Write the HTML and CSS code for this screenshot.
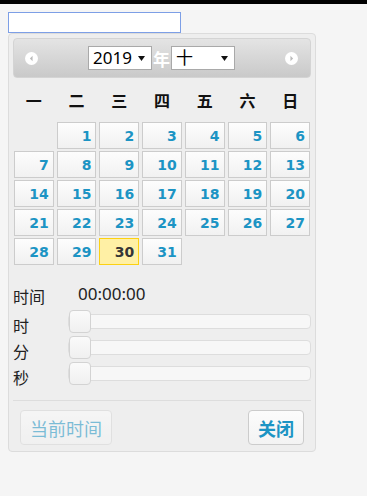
FILE: index.html
```html
<!DOCTYPE html>
<html lang="zh-CN">
<head>
    <meta charset="UTF-8">
    <meta name="viewport" content="width=device-width, initial-scale=1.0">
    <title>日期时间选择</title>
    <link rel="stylesheet" href="styles.css">
</head>
<body>
    <div class="topbar"></div>
    <input type="text" class="date-input" autofocus>

    <div class="datepicker">
        <div class="dp-header">
            <a class="dp-nav" title="上月">
                <svg width="13" height="13" viewBox="0 0 12 12"><circle cx="6" cy="6" r="6" fill="#fff"/><path d="M7 3.5 L4.5 6 L7 8.5 Z" fill="#bbb"/></svg>
            </a>
            <div class="dp-title">
                <span class="select-wrap">
                    <select class="dp-select year">
                        <option>2018</option>
                        <option selected>2019</option>
                        <option>2020</option>
                    </select>
                    <svg class="select-arrow" width="7" height="5" viewBox="0 0 7 5"><path d="M0 0 H7 L3.5 5 Z" fill="#111"/></svg>
                </span>
                <span class="year-label">年</span>
                <span class="select-wrap">
                    <select class="dp-select month">
                        <option>一</option><option>二</option><option>三</option><option>四</option>
                        <option>五</option><option>六</option><option>七</option><option>八</option>
                        <option>九</option><option selected>十</option><option>十一</option><option>十二</option>
                    </select>
                    <svg class="select-arrow" width="7" height="5" viewBox="0 0 7 5"><path d="M0 0 H7 L3.5 5 Z" fill="#111"/></svg>
                </span>
            </div>
            <a class="dp-nav" title="下月">
                <svg width="13" height="13" viewBox="0 0 12 12"><circle cx="6" cy="6" r="6" fill="#fff"/><path d="M5 3.5 L7.5 6 L5 8.5 Z" fill="#bbb"/></svg>
            </a>
        </div>

        <div class="dp-weekdays">
            <span>一</span><span>二</span><span>三</span><span>四</span><span>五</span><span>六</span><span>日</span>
        </div>

        <div class="dp-days" id="days"></div>

        <dl class="dp-time">
            <div class="time-row">
                <dt>时间</dt>
                <dd class="time-value">00:00:00</dd>
            </div>
            <div class="slider-row">
                <dt>时</dt>
                <dd><div class="slider"><span class="handle"></span></div></dd>
            </div>
            <div class="slider-row">
                <dt>分</dt>
                <dd><div class="slider"><span class="handle"></span></div></dd>
            </div>
            <div class="slider-row">
                <dt>秒</dt>
                <dd><div class="slider"><span class="handle"></span></div></dd>
            </div>
        </dl>

        <div class="dp-buttons">
            <button type="button" class="dp-btn" disabled>当前时间</button>
            <button type="button" class="dp-btn primary">关闭</button>
        </div>
    </div>

    <script>
        // Oktober 2019 starts on a Tuesday, week starts on Monday
        const daysDiv = document.getElementById('days');
        const firstOffset = 1;
        const today = 30;

        for (let i = 0; i < firstOffset; i++) {
            const empty = document.createElement('span');
            empty.className = 'day empty';
            daysDiv.appendChild(empty);
        }

        for (let d = 1; d <= 31; d++) {
            const cell = document.createElement('a');
            cell.className = d === today ? 'day today' : 'day';
            cell.textContent = d;
            daysDiv.appendChild(cell);
        }
    </script>
</body>
</html>
```

FILE: styles.css
```css
* {
    box-sizing: border-box;
}

body {
    margin: 0;
    padding: 8px;
    background-color: #f5f5f5;
    font-family: "Noto Sans", "Noto Sans CJK SC", sans-serif;
    color: #222;
}

.topbar {
    height: 4px;
    margin: -8px -8px 8px;
    background: #000;
}

.date-input {
    display: block;
    width: 173px;
    height: 21px;
    margin: 0;
    padding: 0 3px;
    border: 1px solid #7d9fe6;
    background: #fff;
    outline: none;
}

.datepicker {
    width: 308px;
    padding: 4px 4px 6px;
    background: #eeeeee;
    border: 1px solid #dcdcdc;
    border-radius: 4px;
}

.dp-header {
    display: flex;
    align-items: center;
    justify-content: space-between;
    height: 40px;
    padding: 0 12px 0 11px;
    background: linear-gradient(#e4e4e4, #c9c9c9);
    border: 1px solid #d4d4d4;
    border-radius: 4px;
}

.dp-nav {
    display: flex;
    cursor: pointer;
}

.dp-title {
    display: flex;
    align-items: center;
    gap: 1px;
}

.select-wrap {
    position: relative;
    display: flex;
}

.dp-select {
    width: 64px;
    height: 24px;
    margin: 0;
    padding: 0 0 0 4px;
    border: 1px solid #a9a9a9;
    border-radius: 0;
    background: #fff;
    color: #000;
    font-family: "Noto Sans", "Noto Sans CJK SC", sans-serif;
    font-size: 17px;
    line-height: 22px;
    appearance: none;
    -webkit-appearance: none;
}

.select-arrow {
    position: absolute;
    right: 7px;
    top: 10px;
    pointer-events: none;
}

.year-label {
    color: #fff;
    font-weight: bold;
    font-size: 17px;
    font-family: "Noto Sans CJK SC", sans-serif;
}

.dp-weekdays {
    display: grid;
    grid-template-columns: repeat(7, 1fr);
    column-gap: 3px;
    height: 44px;
    margin: 0 1px;
    align-items: center;
    text-align: center;
    font-family: "Noto Sans CJK SC", sans-serif;
    font-weight: bold;
    font-size: 16px;
    color: #111;
}

.dp-days {
    display: grid;
    grid-template-columns: repeat(7, 1fr);
    grid-auto-rows: 27px;
    gap: 2px 3px;
    margin: 0 1px;
}

.day {
    display: flex;
    align-items: center;
    justify-content: flex-end;
    padding-right: 4px;
    border: 1px solid #cccccc;
    background: linear-gradient(#fdfdfd, #f1f1f1);
    color: #1c94c4;
    font-family: "DejaVu Sans", sans-serif;
    font-weight: bold;
    font-size: 14px;
    cursor: pointer;
}

.day.empty {
    border: none;
    background: none;
    cursor: default;
}

.day.today {
    background: #fff0a5;
    border-color: #fcd113;
    color: #363636;
}

.dp-time {
    margin: 18px 0 0;
}

.time-row,
.slider-row {
    display: flex;
}

.time-row {
    height: 24px;
    align-items: center;
}

.time-row dt {
    width: 65px;
    font-size: 16px;
    padding-top: 2px;
}

.time-value {
    margin: 0;
    font-size: 17px;
    color: #222;
    padding-bottom: 3px;
}

.slider-row {
    height: 26px;
}

.slider-row dt {
    width: 55px;
    font-size: 16px;
    line-height: 1;
    padding-top: 11px;
}

.slider-row dd {
    flex: 1;
    margin: 0;
    padding-top: 7px;
}

.slider {
    position: relative;
    height: 15px;
    background: #f7f7f7;
    border: 1px solid #dddddd;
    border-radius: 4px;
}

.handle {
    position: absolute;
    left: 0;
    top: -5px;
    width: 22px;
    height: 23px;
    background: linear-gradient(#fafafa, #f0f0f0);
    border: 1px solid #d3d3d3;
    border-radius: 4px;
}

.dp-buttons {
    display: flex;
    justify-content: space-between;
    margin-top: 15px;
    padding: 9px 7px 0;
    border-top: 1px solid #dddddd;
}

.dp-btn {
    height: 35px;
    padding: 0 9px;
    background: linear-gradient(#fcfcfc, #f3f3f3);
    border: 1px solid #cccccc;
    border-radius: 4px;
    color: #1c94c4;
    font-family: "Noto Sans CJK SC", sans-serif;
    font-size: 18px;
    cursor: pointer;
}

.dp-btn:disabled {
    opacity: 0.55;
    border-color: #d6d6d6;
    cursor: default;
}

.dp-btn.primary {
    font-weight: bold;
}
```
